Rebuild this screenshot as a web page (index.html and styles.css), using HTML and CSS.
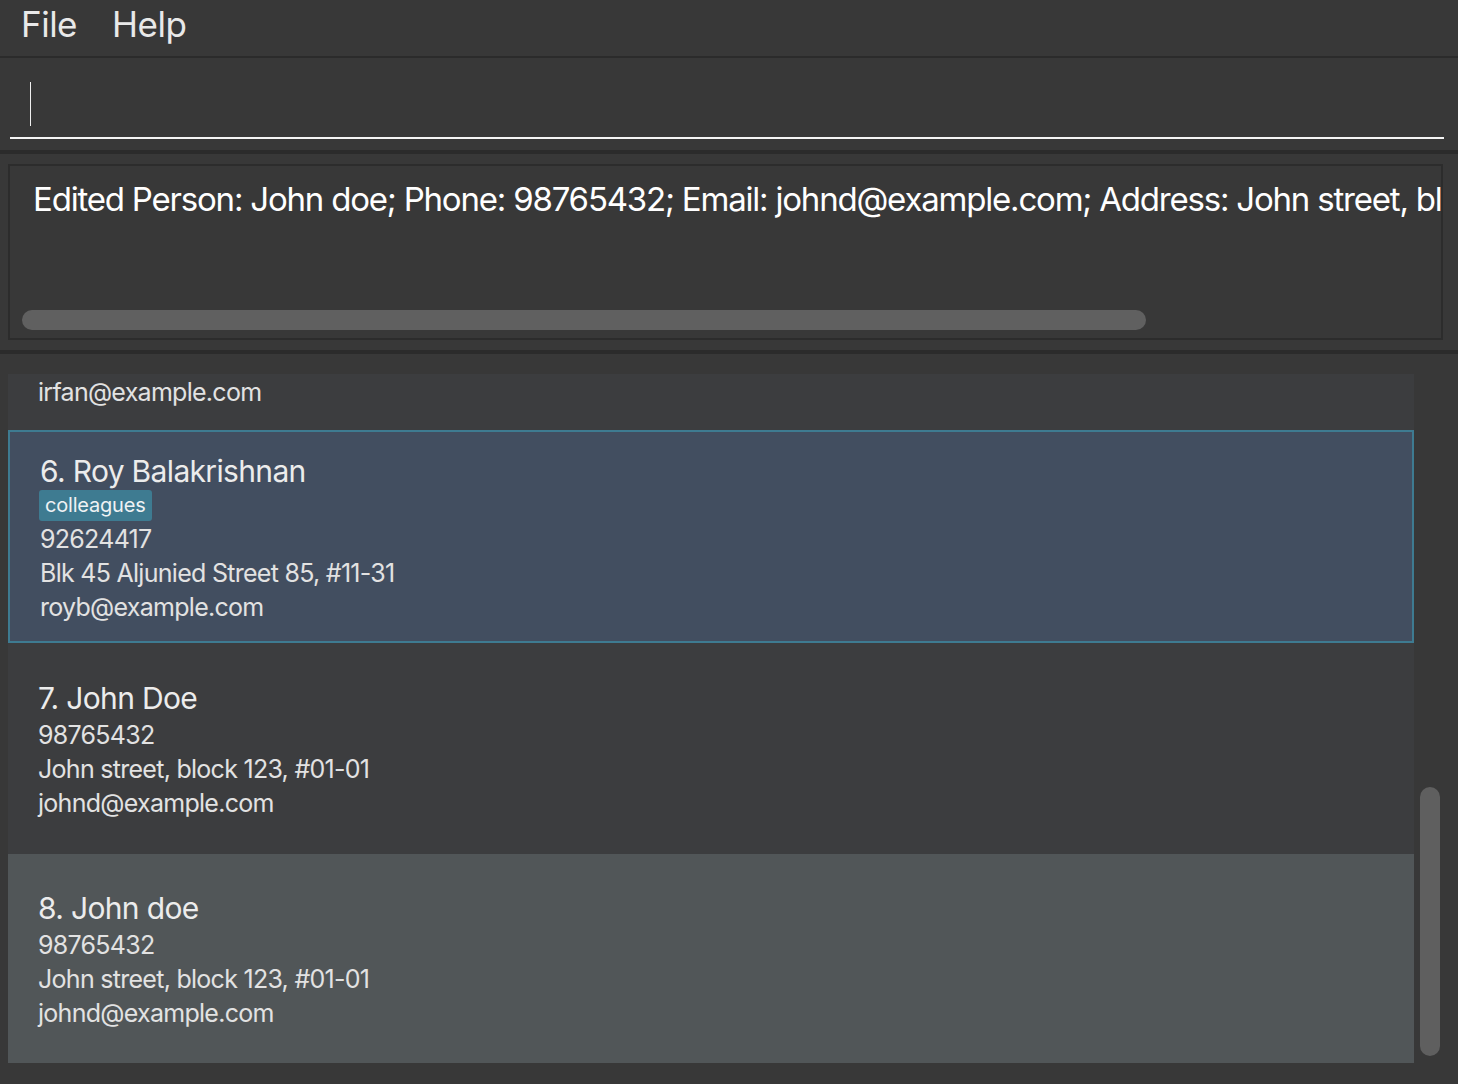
FILE: index.html
```html
<!DOCTYPE html>
<html lang="en">
<head>
<meta charset="utf-8">
<title>Address App</title>
<link rel="stylesheet" href="styles.css">
</head>
<body>
<div class="app">
  <nav class="menubar">
    <span class="menu-item">File</span>
    <span class="menu-item">Help</span>
  </nav>
  <section class="command">
    <div class="command-field"><span class="caret"></span></div>
  </section>
  <section class="result">
    <div class="result-box">
      <div class="result-text">Edited Person: John doe; Phone: 98765432; Email: johnd@example.com; Address: John street, block 123, #01-01; Tags: </div>
      <div class="hscroll"><div class="hthumb"></div></div>
    </div>
  </section>
  <section class="list-panel">
    <div class="list-viewport">
      <div class="list-content">
        <div class="card card-tagged card-odd">
          <div class="name">5. Irfan Ibrahim</div>
          <div class="tags"><span class="tag">classmates</span></div>
          <div class="detail">92492021</div>
          <div class="detail">Blk 47 Tampines Street 20, #17-35</div>
          <div class="detail">irfan@example.com</div>
        </div>
        <div class="card card-tagged card-selected">
          <div class="name">6. Roy Balakrishnan</div>
          <div class="tags"><span class="tag">colleagues</span></div>
          <div class="detail">92624417</div>
          <div class="detail">Blk 45 Aljunied Street 85, #11-31</div>
          <div class="detail">royb@example.com</div>
        </div>
        <div class="card card-odd card-seven">
          <div class="name">7. John Doe</div>
          <div class="detail">98765432</div>
          <div class="detail">John street, block 123, #01-01</div>
          <div class="detail">johnd@example.com</div>
        </div>
        <div class="card card-even card-eight">
          <div class="name">8. John doe</div>
          <div class="detail">98765432</div>
          <div class="detail">John street, block 123, #01-01</div>
          <div class="detail">johnd@example.com</div>
        </div>
      </div>
    </div>
    <div class="vscroll"><div class="vthumb"></div></div>
  </section>
</div>
</body>
</html>
```

FILE: styles.css
```css
* { box-sizing: border-box; }
html, body { margin: 0; padding: 0; }
body {
  background: #383838;
  font-family: Inter, "Noto Sans", "Liberation Sans", sans-serif;
  color: #e6e6e6;
  width: 1458px;
  height: 1084px;
  overflow: hidden;
}
.app { display: flex; flex-direction: column; height: 1084px; }

.menubar {
  height: 58px;
  border-bottom: 2px solid #2b2b2b;
  display: flex;
  align-items: center;
  padding-left: 21px;
  gap: 35px;
}
.menu-item {
  font-size: 35px;
  line-height: 50px;
  color: #e9e9e9;
  letter-spacing: -0.5px;
  margin-top: -8px;
}

.command {
  height: 96px;
  padding: 0 14px 0 10px;
  border-bottom: 4px solid #2b2b2b;
}
.command-field {
  height: 81px;
  border-bottom: 2px solid #f4f4f4;
  padding: 24px 0 0 20px;
}
.caret { display: block; width: 1px; height: 44px; background: #f0f0f0; }

.result {
  height: 200px;
  padding: 10px 15px 10px 8px;
  border-bottom: 4px solid #2b2b2b;
}
.result-box {
  height: 176px;
  border: 2px solid #2c2c2c;
  display: flex;
  flex-direction: column;
  overflow: hidden;
  padding: 13px 0 0 23px;
}
.result-text {
  font-size: 33px;
  line-height: 40px;
  color: #ffffff;
  white-space: nowrap;
  letter-spacing: -1.2px;
  flex: 1;
}
.hscroll { height: 20px; margin: 0 0 8px -11px; }
.hthumb { width: 1124px; height: 20px; border-radius: 10px; background: #606060; }

.list-panel {
  flex: 1;
  display: flex;
  padding: 20px 0 0 8px;
}
.list-viewport {
  width: 1406px;
  height: 689px;
  overflow: hidden;
}
.list-content { margin-top: -157px; }
.card {
  display: flex;
  flex-direction: column;
  justify-content: center;
  padding-left: 30px;
  height: 211px;
}
.card-tagged { height: 213px; }
.card-odd { background: #3c3d3f; }
.card-even { background: #515658; }
.card-eight { height: 209px; padding-top: 2px; }
.card-seven { padding-top: 3px; }
.card-selected {
  background: #424e60;
  border: 2px solid #3e7b91;
  padding-left: 30px;
  padding-top: 3px;
}
.name {
  font-size: 30px;
  line-height: 36px;
  color: #ececec;
  letter-spacing: -0.66px;
  margin-bottom: 2px;
}
.card-tagged .name { margin-bottom: 1px; }
.tags { display: flex; margin-bottom: 1px; margin-left: -1px; }
.tag {
  background: #3e7b91;
  color: #eef2f4;
  font-size: 20px;
  line-height: 31px;
  padding: 0 6px;
  border-radius: 3px;
  letter-spacing: -0.2px;
}
.detail {
  font-size: 25px;
  line-height: 34px;
  color: #e2e2e2;
  letter-spacing: -0.72px;
}

.vscroll {
  width: 44px;
  position: relative;
}
.vthumb {
  position: absolute;
  left: 6px;
  top: 413px;
  width: 20px;
  height: 269px;
  border-radius: 10px;
  background: #5f5f5f;
}
```
